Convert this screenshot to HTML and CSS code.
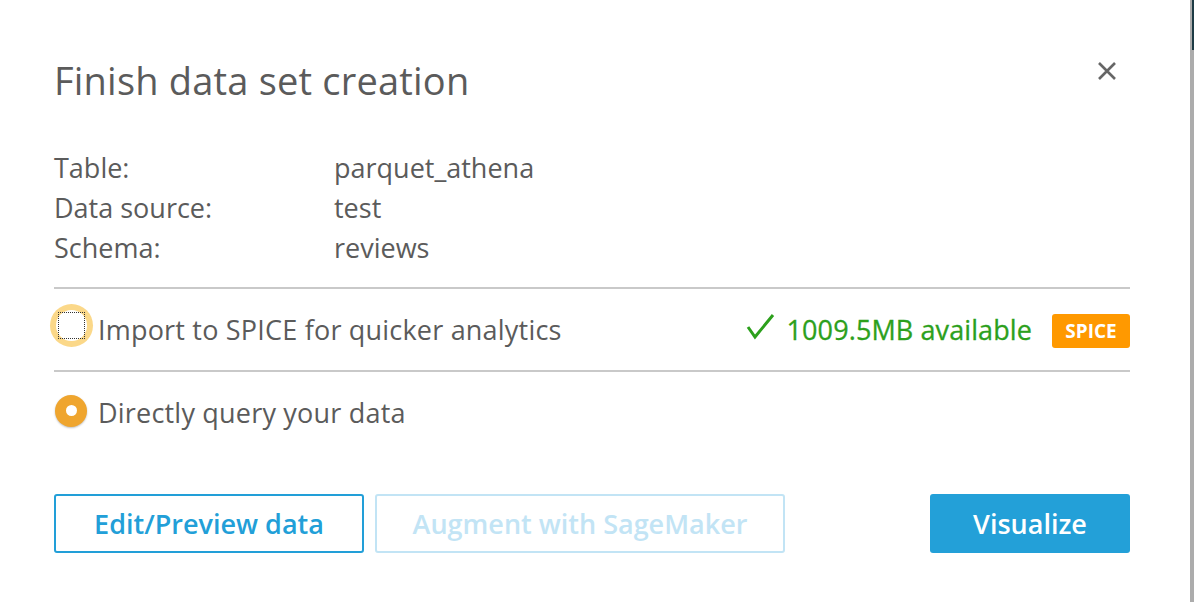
FILE: index.html
```html
<!DOCTYPE html>
<html>
<head>
<meta charset="utf-8">
<link rel="stylesheet" href="styles.css">
</head>
<body>
<div class="page">
  <div class="dialog">
    <div class="header">
      <h1 class="title">Finish data set creation</h1>
      <button class="close" aria-label="Close">
        <svg width="20" height="20" viewBox="0 0 20 20"><path d="M2 2L18 18M18 2L2 18" stroke="#666" stroke-width="2.6" stroke-linecap="butt"/></svg>
      </button>
    </div>
    <div class="info">
      <div class="label">Table:</div><div class="value">parquet_athena</div>
      <div class="label">Data source:</div><div class="value">test</div>
      <div class="label">Schema:</div><div class="value">reviews</div>
    </div>
    <div class="option option-spice">
      <span class="check-ring"><span class="check-inner"><span class="focus"></span></span></span>
      <span class="opt-text">Import to SPICE for quicker analytics</span>
      <span class="avail">
        <svg class="tick" width="30" height="28" viewBox="0 0 30 28"><path d="M3 14L10 24L28 2" fill="none" stroke="#2ca01c" stroke-width="3"/></svg>
        <span class="avail-text">1009.5MB available</span>
      </span>
      <span class="badge">SPICE</span>
    </div>
    <div class="option">
      <span class="radio"><span class="radio-dot"></span></span>
      <span class="opt-text">Directly query your data</span>
    </div>
    <div class="actions">
      <button class="btn btn-outline btn-edit">Edit/Preview data</button>
      <button class="btn btn-disabled">Augment with SageMaker</button>
      <button class="btn btn-primary">Visualize</button>
    </div>
  </div>
  <div class="scrollbar"><div class="thumb"></div></div>
</div>
</body>
</html>
```
FILE: styles.css
```css
html, body {
  margin: 0;
  padding: 0;
  background: #fff;
}
body {
  font-family: "Open Sans", "Noto Sans", sans-serif;
  color: #5b5b5b;
}
.page {
  display: flex;
  width: 1194px;
  height: 602px;
  overflow: hidden;
}
.dialog {
  flex: 1;
  padding: 0 60px 0 54px;
}
.scrollbar {
  width: 4px;
  background: #acacac;
  display: flex;
  flex-direction: column;
  align-items: flex-end;
}
.thumb {
  width: 2px;
  height: 50px;
  background: #1d3a44;
}
.header {
  display: flex;
  justify-content: space-between;
  align-items: flex-start;
  padding-top: 54px;
}
.title {
  margin: 0;
  font-size: 38px;
  font-weight: 400;
  line-height: 52px;
  color: #5b5b5b;
  letter-spacing: 0.2px;
}
.close {
  border: 0;
  background: none;
  padding: 0;
  margin-top: 7px;
  margin-right: 13px;
  width: 20px;
  height: 20px;
  display: flex;
}
.info {
  display: grid;
  grid-template-columns: 280px 1fr;
  margin-top: 42px;
  font-size: 27px;
  line-height: 40px;
}
.option {
  display: flex;
  align-items: center;
  height: 81px;
  border-top: 2px solid #c9c9c9;
  font-size: 27px;
  letter-spacing: 0.2px;
}
.option:last-of-type {
  border-bottom: 2px solid #c9c9c9;
}
.option-spice {
  margin-top: 19px;
}
.check-ring {
  width: 43px;
  height: 43px;
  border-radius: 50%;
  background: #fbd889;
  margin-left: -4px;
  margin-top: -8px;
  display: flex;
  align-items: center;
  justify-content: center;
}
.check-inner {
  width: 31px;
  height: 31px;
  border-radius: 50%;
  background: #fff;
  display: flex;
  align-items: center;
  justify-content: center;
}
.focus {
  width: 27px;
  height: 27px;
  border: 1px dotted #333;
  box-sizing: border-box;
}
.opt-text {
  margin-left: 5px;
}
.avail {
  margin-left: auto;
  display: flex;
  align-items: center;
  color: #2ca01c;
  font-weight: 500;
}
.tick {
  margin-right: 12px;
  margin-top: -6px;
}
.avail-text {
  font-size: 27px;
  letter-spacing: 0.1px;
  -webkit-text-stroke: 0.3px #2ca01c;
}
.badge {
  margin-left: 20px;
  background: #ff9900;
  color: #fff;
  font-weight: 700;
  font-size: 19px;
  letter-spacing: 0;
  border-radius: 3px;
  width: 78px;
  height: 34px;
  display: flex;
  align-items: center;
  justify-content: center;
  margin-top: 2px;
}
.radio {
  width: 32px;
  height: 32px;
  border-radius: 50%;
  background: #efa52e;
  margin-left: 1px;
  margin-top: -4px;
  display: flex;
  align-items: center;
  justify-content: center;
  box-shadow: 0 1px 2px rgba(0,0,0,0.25);
}
.radio-dot {
  width: 11px;
  height: 11px;
  border-radius: 50%;
  background: #fff;
}
.option .radio + .opt-text {
  margin-left: 11px;
}
.actions {
  display: flex;
  align-items: center;
  margin-top: 41px;
  gap: 11px;
}
.btn {
  height: 59px;
  font-family: inherit;
  font-size: 27px;
  font-weight: 600;
  border-radius: 3px;
  box-sizing: border-box;
  padding: 0;
  background: #fff;
}
.btn-outline {
  width: 310px;
  border: 2px solid #229fd8;
  color: #229fd8;
}
.btn-disabled {
  width: 410px;
  border: 2px solid #c2e4f5;
  color: #c2e4f5;
}
.btn-primary {
  margin-left: auto;
  width: 200px;
  border: 0;
  background: #23a0d8;
  color: #fff;
}
```
